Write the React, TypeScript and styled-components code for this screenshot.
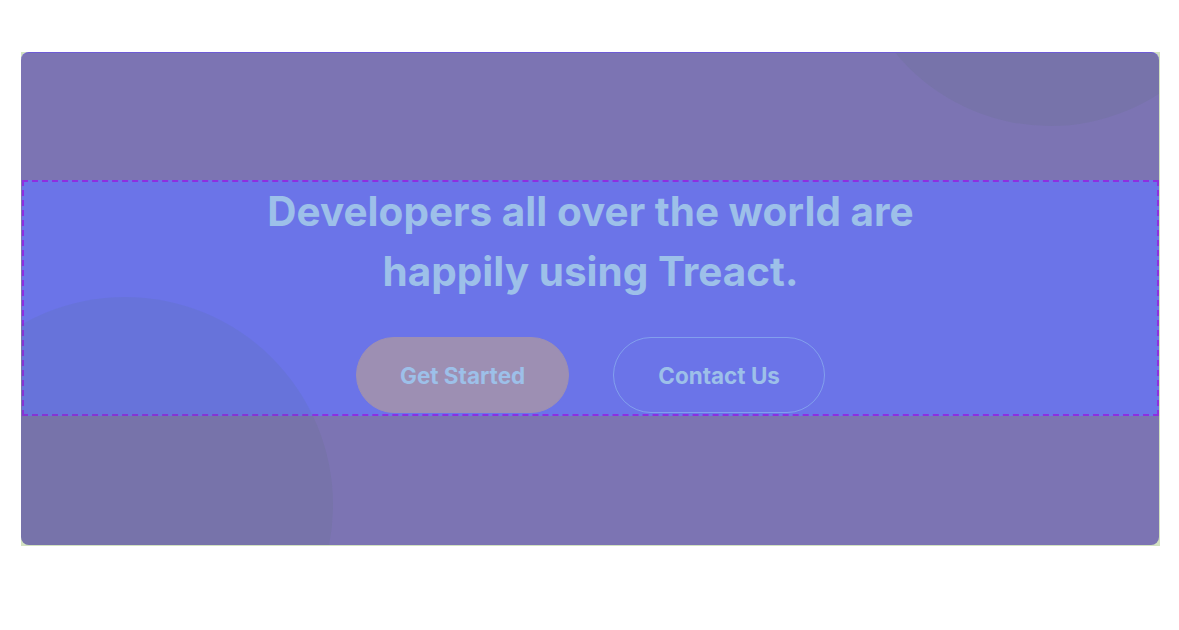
import React from "react";
import styled, { createGlobalStyle } from "styled-components";

const Global = createGlobalStyle`
  html, body { margin: 0; padding: 0; background: #ffffff; }
  body { font-family: Inter, "Noto Sans", sans-serif; }
`;

const Page = styled.div`
  padding: 52px 19px 84px 21px;
`;

const Frame = styled.div`
  width: 1139px;
  padding: 0 1px 1px 0;
  box-sizing: border-box;
  background: #d3e2c2;
`;

const Card = styled.div`
  position: relative;
  overflow: hidden;
  border-radius: 8px;
  border-top: 1px solid #6d5bd6;
  background: #7c74b3;
  padding: 127px 0 129px;
`;

const Blob = styled.div<{ $size: number }>`
  position: absolute;
  width: ${(p) => p.$size}px;
  height: ${(p) => p.$size}px;
  border-radius: 50%;
  background: rgba(70, 110, 60, 0.08);
  pointer-events: none;
  z-index: 2;
`;

const Section = styled.section`
  position: relative;
  margin-left: 1px;
  border: 2px dashed #8e2fe0;
  background: #6b74e8;
  padding-bottom: 1px;
  display: flex;
  flex-direction: column;
  align-items: center;
`;

const Heading = styled.h2`
  margin: 0;
  max-width: 760px;
  text-align: center;
  font-family: Inter, sans-serif;
  font-weight: 700;
  font-size: 40.5px;
  line-height: 60px;
  color: #9dc0e9;
`;

const Actions = styled.div`
  display: flex;
  gap: 44px;
  margin-top: 35px;
`;

const Button = styled.button<{ $primary?: boolean }>`
  height: 76px;
  padding: 0 ${(p) => (p.$primary ? 43 : 44)}px;
  border-radius: 999px;
  font-family: Inter, sans-serif;
  font-weight: 700;
  font-size: 22.5px;
  color: #9dc0e9;
  background: ${(p) => (p.$primary ? "#9d8fb3" : "transparent")};
  border: 1px solid ${(p) => (p.$primary ? "#9d8fb3" : "rgba(150, 195, 240, 0.55)")};
  cursor: pointer;
`;

export default function App() {
  return (
    <>
      <Global />
      <Page>
        <Frame>
          <Card>
            <Blob $size={400} style={{ left: 829, top: -327 }} />
            <Blob $size={416} style={{ left: -104, top: 244 }} />
            <Section>
              <Heading>Developers all over the world are happily using Treact.</Heading>
              <Actions>
                <Button $primary>Get Started</Button>
                <Button>Contact Us</Button>
              </Actions>
            </Section>
          </Card>
        </Frame>
      </Page>
    </>
  );
}
